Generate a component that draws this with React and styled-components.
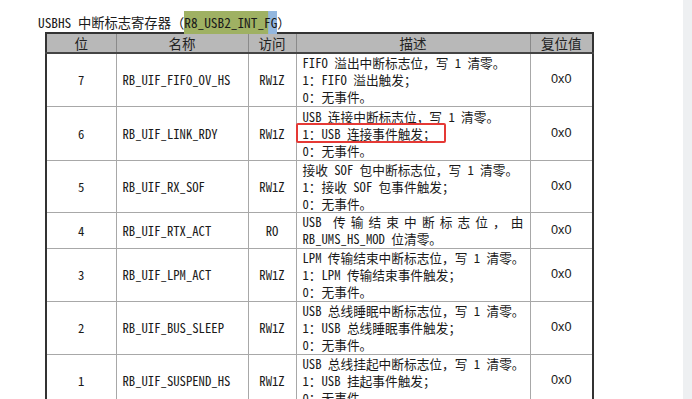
import React from 'react'
import styled, { createGlobalStyle } from 'styled-components'

const GlobalStyle = createGlobalStyle`
  html, body {
    margin: 0;
    padding: 0;
    background: #fff;
    overflow: hidden;
  }
  body {
    font-family: "Noto Sans Mono CJK SC", "Noto Sans CJK SC", sans-serif;
    color: #1a1a1a;
  }
`

const cjk = `"Noto Sans Mono CJK SC", "Noto Sans CJK SC", sans-serif`

const Page = styled.div`
  display: flex;
  width: 692px;
  height: 399px;
`

const Sheet = styled.div`
  flex: 1;
  padding-top: 12px;
`

const Gutter = styled.div`
  width: 9px;
  background: #eef0f2;
`

const Title = styled.div`
  padding-left: 38px;
  font-size: 13.3px;
  line-height: 21px;
  height: 20px;
  font-family: ${cjk};
`

const Mark = styled.span`
  background: linear-gradient(90deg, #9fb163 0, #9fb163 90%, #93b7df 91%);
  padding: 2px 0;
`

const Table = styled.table`
  margin-left: 45px;
  width: 547px;
  border-collapse: collapse;
  table-layout: fixed;
  border-top: 2px solid #333;
  border-left: 2px solid #333;
  border-right: 2px solid #333;
  font-size: 12.7px;
`

const Head = styled.th`
  background: #b8b8b8;
  font-weight: 500;
  font-size: 13.5px;
  line-height: 18px;
  height: 18px;
  padding: 0;
  border-left: 1px solid #8a8a8a;
  border-bottom: 2px solid #444;
  text-align: center;
  color: #222;
`

const Cell = styled.td`
  border: 1px solid #a8a8a8;
  text-align: ${p => (p.$left ? 'left' : 'center')};
  padding: ${p => (p.$left ? '0 6px' : '0')};
  line-height: 17px;
  height: ${p => p.$h}px;
  box-sizing: border-box;
  vertical-align: middle;
  font-family: ${p => (p.$num ? '"Liberation Sans", Arial, sans-serif' : cjk)};
`

const Desc = styled.div`
  height: 17px;
  line-height: 17px;
  white-space: nowrap;
  text-align: left;
  text-align-last: ${p => (p.$justify ? 'justify' : 'left')};
`

const Boxed = styled.span`
  position: relative;
  &::after {
    content: '';
    position: absolute;
    left: -7px;
    top: -1px;
    width: 150px;
    height: 20px;
    border: 2px solid #e53935;
    border-radius: 2px;
    box-sizing: border-box;
  }
`

const rows = [
  {
    bit: 7, name: 'RB_UIF_FIFO_OV_HS', acc: 'RW1Z', h: 53,
    lines: ['FIFO 溢出中断标志位，写 1 清零。', '1：FIFO 溢出触发；', '0：无事件。']
  },
  {
    bit: 6, name: 'RB_UIF_LINK_RDY', acc: 'RW1Z', h: 54, box: 1,
    lines: ['USB 连接中断标志位，写 1 清零。', '1：USB 连接事件触发；', '0：无事件。']
  },
  {
    bit: 5, name: 'RB_UIF_RX_SOF', acc: 'RW1Z', h: 52,
    lines: ['接收 SOF 包中断标志位，写 1 清零。', '1：接收 SOF 包事件触发；', '0：无事件。']
  },
  {
    bit: 4, name: 'RB_UIF_RTX_ACT', acc: 'RO', h: 36, justify: 0,
    lines: ['USB 传输结束中断标志位，由', 'RB_UMS_HS_MOD 位清零。']
  },
  {
    bit: 3, name: 'RB_UIF_LPM_ACT', acc: 'RW1Z', h: 53,
    lines: ['LPM 传输结束中断标志位，写 1 清零。', '1：LPM 传输结束事件触发；', '0：无事件。']
  },
  {
    bit: 2, name: 'RB_UIF_BUS_SLEEP', acc: 'RW1Z', h: 53,
    lines: ['USB 总线睡眠中断标志位，写 1 清零。', '1：USB 总线睡眠事件触发；', '0：无事件。']
  },
  {
    bit: 1, name: 'RB_UIF_SUSPEND_HS', acc: 'RW1Z', h: 53,
    lines: ['USB 总线挂起中断标志位，写 1 清零。', '1：USB 挂起事件触发；', '0：无事件。']
  }
]

export default function App() {
  return (
    <Page>
      <GlobalStyle />
      <Sheet>
        <Title>
          USBHS 中断标志寄存器（<Mark>R8_USB2_INT_FG</Mark>）
        </Title>
        <Table>
          <colgroup>
            <col style={{ width: 70 }} />
            <col style={{ width: 132 }} />
            <col style={{ width: 48 }} />
            <col style={{ width: 234 }} />
            <col style={{ width: 63 }} />
          </colgroup>
          <thead>
            <tr>
              <Head>位</Head>
              <Head>名称</Head>
              <Head>访问</Head>
              <Head>描述</Head>
              <Head>复位值</Head>
            </tr>
          </thead>
          <tbody>
            {rows.map(r => (
              <tr key={r.bit}>
                <Cell $h={r.h}>{r.bit}</Cell>
                <Cell $h={r.h} $left>{r.name}</Cell>
                <Cell $h={r.h}>{r.acc}</Cell>
                <Cell $h={r.h} $left>
                  {r.lines.map((l, i) => (
                    <Desc key={i} $justify={r.justify === i}>
                      {r.box === i ? <Boxed>{l}</Boxed> : l}
                    </Desc>
                  ))}
                </Cell>
                <Cell $h={r.h} $num>0x0</Cell>
              </tr>
            ))}
          </tbody>
        </Table>
      </Sheet>
      <Gutter />
    </Page>
  )
}
